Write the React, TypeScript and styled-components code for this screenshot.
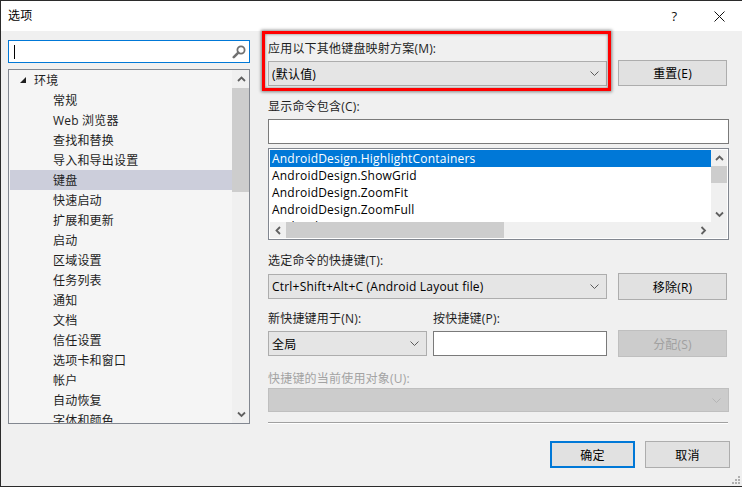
import React from "react";
import styled, { createGlobalStyle } from "styled-components";

const Global = createGlobalStyle`
  html, body { margin: 0; padding: 0; background: #f0f0f0; }
  body {
    font-family: "Open Sans", "Noto Sans CJK SC", sans-serif;
    font-size: 12px;
    letter-spacing: 0.2px;
    color: #000;
  }
  * { box-sizing: border-box; }
`;

const Window = styled.div`
  position: relative;
  width: 742px;
  height: 487px;
  background: #f0f0f0;
  border-top: 1px solid #2b2b2b;
  border-left: 1px solid #2b2b2b;
  border-bottom: 1px solid #2b2b2b;
  display: flex;
  flex-direction: column;
  overflow: hidden;
`;

const TitleBar = styled.div`
  height: 30px;
  background: #fff;
  display: flex;
  align-items: center;
  padding-left: 7px;
  flex-shrink: 0;
`;

const Title = styled.div`
  font-size: 12px;
  line-height: 16px;
  color: #000;
`;

const TitleControls = styled.div`
  margin-left: auto;
  display: flex;
`;

const TitleButton = styled.div`
  width: 45px;
  height: 30px;
  display: flex;
  align-items: center;
  justify-content: center;
  color: #111;
  font-size: 13px;
`;

const Body = styled.div`
  flex: 1;
  display: flex;
  gap: 18px;
  padding: 9px 0 0 7px;
`;

const LeftCol = styled.div`
  width: 242px;
  display: flex;
  flex-direction: column;
  gap: 6px;
`;

const SearchBox = styled.div`
  height: 23px;
  border: 1px solid #0078d7;
  background: #fff;
  display: flex;
  align-items: center;
  padding: 0 3px 0 5px;
`;

const Caret = styled.div`
  width: 1px;
  height: 14px;
  background: #000;
`;

const SearchIcon = styled.svg`
  margin-left: auto;
`;

const Tree = styled.div`
  height: 355px;
  border: 1px solid #828790;
  background: #f5f5f5;
  display: flex;
`;

const TreeContent = styled.div`
  flex: 1;
  overflow: hidden;
  padding: 0 0 0 1px;
`;

const TreeRow = styled.div<{ $level: number; $selected?: boolean }>`
  height: 20px;
  display: flex;
  align-items: center;
  padding-left: ${(p) => (p.$level === 0 ? 10 : 43)}px;
  background: ${(p) => (p.$selected ? "#cccedb" : "transparent")};
  color: #1e1e1e;
  white-space: nowrap;
`;

const Expander = styled.svg`
  margin-right: 8px;
`;

const VScroll = styled.div<{ $w: number }>`
  width: ${(p) => p.$w}px;
  background: #f0f0f0;
  display: flex;
  flex-direction: column;
  align-items: stretch;
`;

const ArrowCell = styled.div<{ $size: number }>`
  height: ${(p) => p.$size}px;
  min-width: ${(p) => p.$size}px;
  display: flex;
  align-items: center;
  justify-content: center;
  flex-shrink: 0;
`;

const Thumb = styled.div<{ $len: number }>`
  background: #cdcdcd;
  flex: 0 0 ${(p) => p.$len}px;
`;

const Spacer = styled.div`
  flex: 1;
`;

const RightCol = styled.div`
  width: 461px;
  display: flex;
  flex-direction: column;
`;

const Label = styled.div<{ $mt?: number; $disabled?: boolean }>`
  height: 16px;
  line-height: 18px;
  margin-top: ${(p) => p.$mt ?? 0}px;
  color: ${(p) => (p.$disabled ? "#a3a3a3" : "#1e1e1e")};
  white-space: nowrap;
`;

const Row = styled.div<{ $mt?: number }>`
  display: flex;
  align-items: center;
  margin-top: ${(p) => p.$mt ?? 0}px;
`;

const Highlighted = styled.div`
  position: relative;
  display: flex;
  flex-direction: column;
  gap: 5px;
  &::after {
    content: "";
    position: absolute;
    top: -9px;
    left: -6px;
    right: -4px;
    bottom: -5px;
    border: 3px solid #ff0000;
    box-shadow: 0 0 3px 1px rgba(0, 0, 0, 0.45), inset 0 0 3px rgba(0, 0, 0, 0.5);
    pointer-events: none;
  }
`;

const Combo = styled.div<{ $w: number; $h?: number; $disabled?: boolean }>`
  width: ${(p) => p.$w}px;
  height: ${(p) => p.$h ?? 25}px;
  border: 1px solid ${(p) => (p.$disabled ? "#bfbfbf" : "#adadad")};
  background: ${(p) => (p.$disabled ? "#cccccc" : "#e5e5e5")};
  display: flex;
  align-items: center;
  padding: 0 7px 0 3px;
  color: #000;
  white-space: nowrap;
`;

const ComboText = styled.span`
  flex: 1;
  overflow: hidden;
`;

const TextBox = styled.div<{ $w: number; $ml?: number; $mt?: number }>`
  width: ${(p) => p.$w}px;
  height: 25px;
  margin-left: ${(p) => p.$ml ?? 0}px;
  margin-top: ${(p) => p.$mt ?? 0}px;
  border: 1px solid #7a7a7a;
  background: #fff;
`;

const Button = styled.div<{ $w?: number; $disabled?: boolean; $primary?: boolean; $ml?: number; $h?: number; $end?: boolean }>`
  width: ${(p) => p.$w ?? 109}px;
  height: ${(p) => p.$h ?? 26}px;
  margin-left: ${(p) => p.$ml ?? 0}px;
  border: ${(p) =>
    p.$primary ? "2px solid #0078d7" : p.$disabled ? "1px solid #bfbfbf" : "1px solid #adadad"};
  background: ${(p) => (p.$disabled ? "#cccccc" : "#e1e1e1")};
  color: ${(p) => (p.$disabled ? "#a0a0a0" : "#000")};
  display: flex;
  align-items: center;
  justify-content: center;
  flex-shrink: 0;
  align-self: ${(p) => (p.$end ? "flex-end" : "auto")};
`;

const ListBox = styled.div`
  margin-top: 4px;
  width: 461px;
  height: 92px;
  border: 1px solid #828790;
  background: #fff;
  padding: 1px;
  display: grid;
  grid-template-columns: 1fr 16px;
  grid-template-rows: 1fr 16px;
`;

const ListContent = styled.div`
  overflow: hidden;
`;

const ListRow = styled.div<{ $selected?: boolean }>`
  height: 17px;
  line-height: 17px;
  padding-left: 2px;
  white-space: nowrap;
  background: ${(p) => (p.$selected ? "#0078d7" : "transparent")};
  color: ${(p) => (p.$selected ? "#fff" : "#000")};
`;

const HScroll = styled.div`
  background: #f0f0f0;
  display: flex;
  align-items: stretch;
`;

const Corner = styled.div`
  background: #f0f0f0;
`;

const LabelGrid = styled.div<{ $mt: number }>`
  display: grid;
  grid-template-columns: 159px 174px;
  column-gap: 6px;
  margin-top: ${(p) => p.$mt}px;
`;

const Separator = styled.div`
  margin-top: 10px;
  width: 460px;
  height: 2px;
  border-top: 1px solid #a0a0a0;
  border-bottom: 1px solid #fff;
`;

const Footer = styled.div`
  margin-top: 17px;
  margin-right: -1px;
  display: flex;
  justify-content: flex-end;
  gap: 10px;
`;

const Grip = styled.svg`
  position: absolute;
  right: 2px;
  bottom: 2px;
`;

const Chevron = ({ dir, color = "#606060" }: { dir: "up" | "down" | "left" | "right"; color?: string }) => {
  const paths: Record<string, string> = {
    up: "M1 6 L4.5 2.5 L8 6",
    down: "M1 2.5 L4.5 6 L8 2.5",
    left: "M6 1 L2.5 4.5 L6 8",
    right: "M2.5 1 L6 4.5 L2.5 8",
  };
  return (
    <svg width="9" height="9" viewBox="0 0 9 9">
      <path d={paths[dir]} fill="none" stroke={color} strokeWidth={1.8} />
    </svg>
  );
};

const DropArrow = ({ color = "#5a5a5a" }: { color?: string }) => (
  <svg width="9" height="5" viewBox="0 0 9 5">
    <path d="M0.5 0.5 L4.5 4.5 L8.5 0.5" fill="none" stroke={color} strokeWidth="1" />
  </svg>
);

const treeItems: { text: string; level: number; selected?: boolean }[] = [
  { text: "环境", level: 0 },
  { text: "常规", level: 1 },
  { text: "Web 浏览器", level: 1 },
  { text: "查找和替换", level: 1 },
  { text: "导入和导出设置", level: 1 },
  { text: "键盘", level: 1, selected: true },
  { text: "快速启动", level: 1 },
  { text: "扩展和更新", level: 1 },
  { text: "启动", level: 1 },
  { text: "区域设置", level: 1 },
  { text: "任务列表", level: 1 },
  { text: "通知", level: 1 },
  { text: "文档", level: 1 },
  { text: "信任设置", level: 1 },
  { text: "选项卡和窗口", level: 1 },
  { text: "帐户", level: 1 },
  { text: "自动恢复", level: 1 },
  { text: "字体和颜色", level: 1 },
];

const commands = [
  "AndroidDesign.HighlightContainers",
  "AndroidDesign.ShowGrid",
  "AndroidDesign.ZoomFit",
  "AndroidDesign.ZoomFull",
  "AndroidDesign.ZoomIn",
];

export default function App() {
  return (
    <>
      <Global />
      <Window>
        <TitleBar>
          <Title>选项</Title>
          <TitleControls>
            <TitleButton>?</TitleButton>
            <TitleButton>
              <svg width="11" height="11" viewBox="0 0 11 11">
                <path d="M0.5 0.5 L10.5 10.5 M10.5 0.5 L0.5 10.5" stroke="#111" strokeWidth="1" />
              </svg>
            </TitleButton>
          </TitleControls>
        </TitleBar>
        <Body>
          <LeftCol>
            <SearchBox>
              <Caret />
              <SearchIcon width="14" height="14" viewBox="0 0 14 14">
                <circle cx="9" cy="5" r="3.6" fill="none" stroke="#717171" strokeWidth="1.8" />
                <path d="M6.3 7.7 L1.8 12.2" stroke="#717171" strokeWidth="2.6" strokeLinecap="round" />
              </SearchIcon>
            </SearchBox>
            <Tree>
              <TreeContent>
                {treeItems.map((it) => (
                  <TreeRow key={it.text} $level={it.level} $selected={it.selected}>
                    {it.level === 0 && (
                      <Expander width="6" height="6" viewBox="0 0 6 6">
                        <polygon points="6,0 6,6 0,6" fill="#1e1e1e" />
                      </Expander>
                    )}
                    {it.text}
                  </TreeRow>
                ))}
              </TreeContent>
              <VScroll $w={17}>
                <ArrowCell $size={18}>
                  <Chevron dir="up" />
                </ArrowCell>
                <Thumb $len={104} />
                <Spacer />
                <ArrowCell $size={18}>
                  <Chevron dir="down" />
                </ArrowCell>
              </VScroll>
            </Tree>
          </LeftCol>

          <RightCol>
            <Row>
              <Highlighted>
                <Label>应用以下其他键盘映射方案(M):</Label>
                <Combo $w={339}>
                  <ComboText>(默认值)</ComboText>
                  <DropArrow />
                </Combo>
              </Highlighted>
              <Button $ml={11} $end>
                重置(E)
              </Button>
            </Row>

            <Label $mt={12}>显示命令包含(C):</Label>
            <TextBox $w={461} $mt={5} />

            <ListBox>
              <ListContent>
                {commands.map((c, i) => (
                  <ListRow key={c} $selected={i === 0}>
                    {c}
                  </ListRow>
                ))}
              </ListContent>
              <VScroll $w={16}>
                <ArrowCell $size={16}>
                  <Chevron dir="up" />
                </ArrowCell>
                <Thumb $len={17} />
                <Spacer />
                <ArrowCell $size={16}>
                  <Chevron dir="down" />
                </ArrowCell>
              </VScroll>
              <HScroll>
                <ArrowCell $size={16}>
                  <Chevron dir="left" />
                </ArrowCell>
                <Thumb $len={218} />
                <Spacer />
                <ArrowCell $size={16}>
                  <Chevron dir="right" />
                </ArrowCell>
              </HScroll>
              <Corner />
            </ListBox>

            <Label $mt={12}>选定命令的快捷键(T):</Label>
            <Row $mt={5}>
              <Combo $w={339}>
                <ComboText>Ctrl+Shift+Alt+C (Android Layout file)</ComboText>
                <DropArrow />
              </Combo>
              <Button $ml={11} $h={27}>移除(R)</Button>
            </Row>

            <LabelGrid $mt={10}>
              <Label>新快捷键用于(N):</Label>
              <Label>按快捷键(P):</Label>
            </LabelGrid>
            <Row $mt={4}>
              <Combo $w={159}>
                <ComboText>全局</ComboText>
                <DropArrow />
              </Combo>
              <TextBox $w={174} $ml={6} />
              <Button $ml={11} $h={27} $disabled>
                分配(S)
              </Button>
            </Row>

            <Label $mt={13} $disabled>
              快捷键的当前使用对象(U):
            </Label>
            <Row $mt={2}>
              <Combo $w={461} $h={24} $disabled>
                <ComboText />
                <DropArrow color="#b5b5b5" />
              </Combo>
            </Row>

            <Separator />

            <Footer>
              <Button $w={85} $h={27} $primary>
                确定
              </Button>
              <Button $w={85} $h={27}>
                取消
              </Button>
            </Footer>
          </RightCol>
        </Body>
        <Grip width="8" height="8" viewBox="0 0 8 8">
          <rect x="6" y="0" width="2" height="2" fill="#b0b0b0" />
          <rect x="3" y="3" width="2" height="2" fill="#b0b0b0" />
          <rect x="6" y="3" width="2" height="2" fill="#b0b0b0" />
          <rect x="0" y="6" width="2" height="2" fill="#b0b0b0" />
          <rect x="3" y="6" width="2" height="2" fill="#b0b0b0" />
          <rect x="6" y="6" width="2" height="2" fill="#b0b0b0" />
        </Grip>
      </Window>
    </>
  );
}
